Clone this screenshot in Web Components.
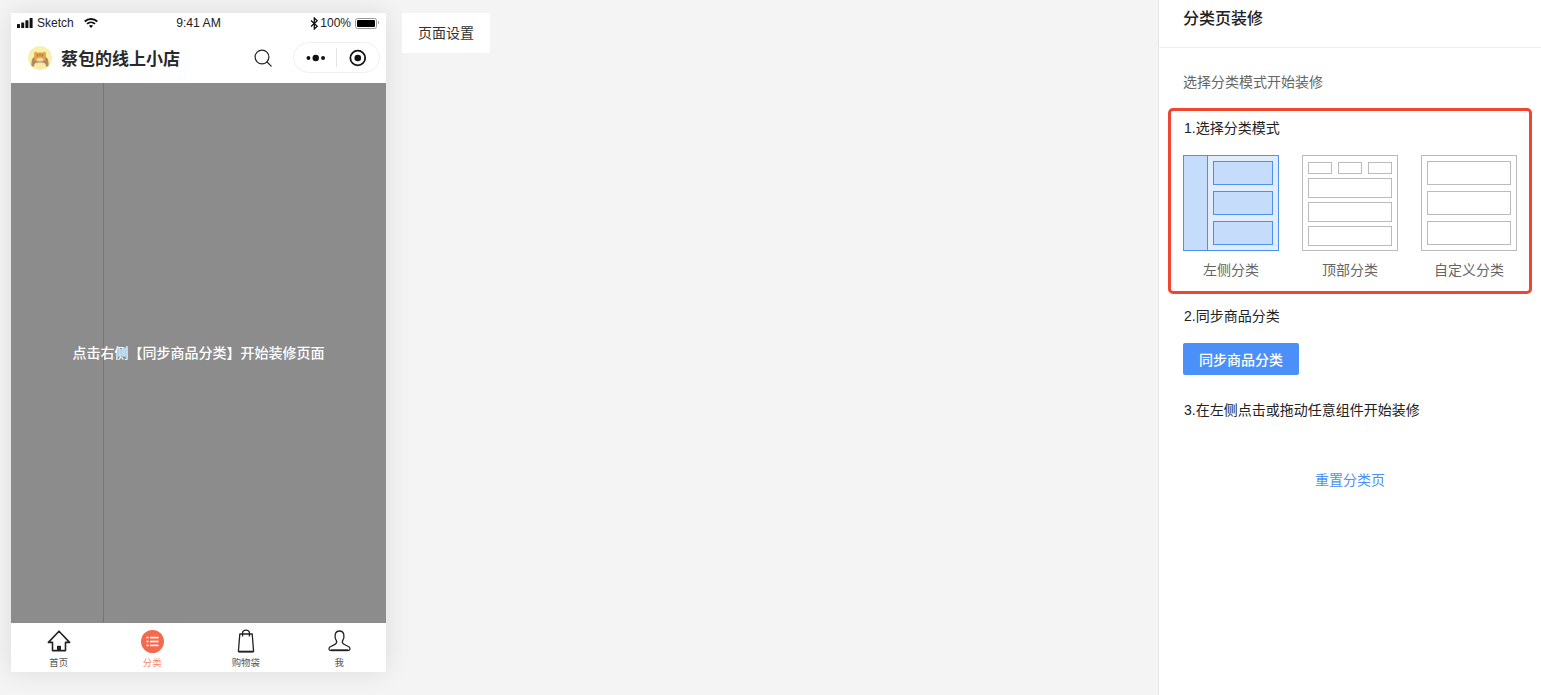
<!DOCTYPE html>
<html lang="zh">
<head>
<meta charset="utf-8">
<title>分类页装修</title>
<style>
	html, body {
		margin: 0;
		height: 100%;
		overflow: hidden;
		background: #f4f4f4;
		font-family: "Liberation Sans", "Noto Sans CJK SC", sans-serif;
	}
</style>
</head>
<body>
<decor-page>
	<phone-preview slot="phone">
		<span slot="title">蔡包的线上小店</span>
		<span slot="hint">点击右侧【同步商品分类】开始装修页面</span>
	</phone-preview>
	<settings-tab slot="tab">页面设置</settings-tab>
	<decor-panel slot="panel"></decor-panel>
</decor-page>

<script>
class DecorPage extends HTMLElement {
	constructor() {
		super();
		this.attachShadow({ mode: "open" });
		this.shadowRoot.innerHTML = /* HTML */ `
			<slot name="phone"></slot>
			<slot name="tab"></slot>
			<div class="right"><slot name="panel"></slot></div>

			<style>
				:host {
					display: flex;
					align-items: flex-start;
					gap: 16px;
					height: 695px;
					padding-left: 11px;
					box-sizing: border-box;
				}
				.right {
					margin-left: auto;
					height: 100%;
				}
			</style>
		`;
	}
}

class StatusBar extends HTMLElement {
	constructor() {
		super();
		this.attachShadow({ mode: "open" });
		this.shadowRoot.innerHTML = /* HTML */ `
			<div class="side">
				<svg width="16" height="10" viewBox="0 0 16 10" fill="#111">
					<rect x="0" y="6" width="3" height="4" rx=".6"/>
					<rect x="4.200" y="4.400" width="3" height="5.600" rx=".6"/>
					<rect x="8.400" y="2.200" width="3" height="7.800" rx=".6"/>
					<rect x="12.600" y="0" width="3" height="10" rx=".6"/>
				</svg>
				<span class="carrier">Sketch</span>
				<svg class="wifi" width="14" height="10" viewBox="0 0 14 10" fill="none" stroke="#111" stroke-width="1.900">
					<path d="M.7 3.500C4.300 .2 9.700 .2 13.300 3.500"/>
					<path d="M3 5.900C5.300 3.800 8.700 3.800 11 5.900"/>
					<path d="M7 10 4.900 7.800C6.200 6.800 7.800 6.800 9.100 7.800Z" fill="#111" stroke="none"/>
				</svg>
			</div>
			<span class="time">9:41 AM</span>
			<div class="side end">
				<svg width="9" height="13" viewBox="0 0 9 13" fill="none" stroke="#111" stroke-width="1.300">
					<path d="M1 3.500 7.200 9.200 4.300 12V1L7.200 3.800 1 9.500"/>
				</svg>
				<span class="pct">100%</span>
				<div class="battery"><i></i></div>
			</div>

			<style>
				:host {
					display: grid;
					grid-template-columns: 1fr auto 1fr;
					align-items: center;
					height: 20px;
					padding: 0 6px 7px 6px;
					font-size: 12px;
					color: #222;
				}
				.side {
					display: flex;
					align-items: center;
				}
				.end {
					justify-content: flex-end;
				}
				.carrier {
					margin-left: 4px;
				}
				.wifi {
					margin-left: 10px;
				}
				.time {
					font-size: 12.200px;
				}
				.pct {
					margin-left: 1px;
				}
				.battery {
					position: relative;
					margin: 0 3px 0 4px;
					width: 22px;
					height: 11px;
					padding: 1px;
					box-sizing: border-box;
					border: 1px solid #999;
					border-radius: 2.500px;
				}
				.battery::after {
					content: "";
					position: absolute;
					right: -3px;
					top: 2px;
					width: 1px;
					height: 3px;
					background: #aaa;
				}
				.battery i {
					display: block;
					height: 100%;
					background: #000;
					border-radius: 1px;
				}
			</style>
		`;
	}
}

class NavBar extends HTMLElement {
	constructor() {
		super();
		this.attachShadow({ mode: "open" });
		this.shadowRoot.innerHTML = /* HTML */ `
			<svg class="avatar" width="24" height="24" viewBox="0 0 24 24">
				<circle cx="12" cy="12" r="12" fill="#f7f1ad"/>
				<path d="M3.500 20C3 13 5 11 7 11L17 11C19 11 21 13 20.500 20L17 21H7Z" fill="#b08a5e"/>
				<path d="M6 21C6 17 8 16.500 12 16.500S18 17 18 21C15 23.500 9 23.500 6 21Z" fill="#f8e9a8"/>
				<path d="M6.500 5.500 9 6.500H15L17.500 5.500 18 11C18 15 15 16 12 16S6 15 6 11Z" fill="#e5a049"/>
				<path d="M9 8 10 10.500M12 7.500V10M15 8 14 10.500" stroke="#a8702f" stroke-width=".9" fill="none"/>
				<ellipse cx="12" cy="13.500" rx="3.500" ry="1.800" fill="#f2d9a4"/>
			</svg>
			<span class="title"><slot></slot></span>
			<svg class="search" width="18" height="18" viewBox="0 0 18 18" fill="none" stroke="#222" stroke-width="1.200">
				<circle cx="8" cy="8" r="6.900"/>
				<path d="M13 13 17.200 17.200" stroke-linecap="round"/>
			</svg>
			<div class="capsule">
				<svg width="20" height="8" viewBox="0 0 20 8" fill="#111">
					<circle cx="2.500" cy="4" r="2"/>
					<circle cx="10" cy="4" r="3.300"/>
					<circle cx="17.500" cy="4" r="2"/>
				</svg>
				<i class="divider"></i>
				<svg width="18" height="18" viewBox="0 0 18 18">
					<circle cx="9" cy="9" r="7.600" fill="none" stroke="#111" stroke-width="1.800"/>
					<circle cx="9" cy="9" r="3.400" fill="#111"/>
				</svg>
			</div>

			<style>
				:host {
					display: flex;
					align-items: center;
					padding: 2px 6px 10px 17px;
					height: 31px;
				}
				.avatar {
					flex: none;
				}
				.title {
					margin-left: 9px;
					font-size: 17px;
					font-weight: 700;
					color: #2a2a2a;
					white-space: nowrap;
				}
				.search {
					margin-left: auto;
					margin-right: 21px;
				}
				.capsule {
					display: flex;
					align-items: center;
					box-sizing: border-box;
					width: 87px;
					height: 31px;
					border: 1px solid #f0f0f0;
					border-radius: 16px;
					padding: 0 12px;
				}
				.divider {
					width: 1px;
					height: 19px;
					margin: 0 12px 0 11px;
					background: #e4e4e4;
				}
			</style>
		`;
	}
}

class TabItem extends HTMLElement {
	constructor() {
		super();
		this.attachShadow({ mode: "open" });
		this.shadowRoot.innerHTML = /* HTML */ `
			<div class="icon"><slot name="icon"></slot></div>
			<span class="label"><slot></slot></span>

			<style>
				:host {
					flex: 1;
					display: flex;
					flex-direction: column;
					align-items: center;
					color: #555;
				}
				:host([active]) {
					color: #f58a72;
				}
				.icon {
					display: flex;
					align-items: center;
					justify-content: center;
					height: 24px;
					margin-top: 6px;
				}
				.label {
					margin-top: 4px;
					font-size: 9.400px;
					line-height: 12px;
				}
			</style>
		`;
	}
}

class TabBar extends HTMLElement {
	constructor() {
		super();
		this.attachShadow({ mode: "open" });
		this.shadowRoot.innerHTML = /* HTML */ `
			<tab-item>
				<svg slot="icon" width="24" height="22" viewBox="0 0 24 22" fill="none" stroke="#222" stroke-width="1.600" stroke-linejoin="round">
					<path d="M12 1.200 1.400 12.400H5.500V20.600H18.500V12.400H22.600Z"/>
					<path d="M10 20.800V15.800H14V20.800" fill="#222" stroke="none"/>
				</svg>
				首页
			</tab-item>
			<tab-item active>
				<svg slot="icon" width="23" height="23" viewBox="0 0 23 23">
					<circle cx="11.500" cy="11.500" r="11.500" fill="#f36b4f"/>
					<g fill="#fff">
						<rect x="5.500" y="6.800" width="2" height="1.600"/>
						<rect x="9" y="6.800" width="8.500" height="1.600"/>
						<rect x="5.500" y="10.700" width="2" height="1.600"/>
						<rect x="9" y="10.700" width="8.500" height="1.600"/>
						<rect x="5.500" y="14.600" width="2" height="1.600"/>
						<rect x="9" y="14.600" width="8.500" height="1.600"/>
					</g>
				</svg>
				分类
			</tab-item>
			<tab-item>
				<svg slot="icon" width="18" height="24" viewBox="0 0 18 24" fill="none" stroke="#222" stroke-width="1.300" stroke-linejoin="round">
					<path d="M2.800 5H15.200L16.600 22.600H1.400Z"/>
					<path d="M1.800 22.600H16.200" stroke-width="1.800"/>
					<path d="M5.600 7.500V3.400C5.600 .4 12.400 .4 12.400 3.400V7.500"/>
				</svg>
				购物袋
			</tab-item>
			<tab-item>
				<svg slot="icon" width="23" height="22" viewBox="0 0 23 22" fill="none" stroke="#222" stroke-width="1.300" stroke-linejoin="round">
					<path d="M8.500 11C6 7.500 6.500 1 11.500 1S17 7.500 14.500 11C14 12.500 14.500 13.500 16 14.300L21.200 17C22.500 18 22 20.300 20.800 20.300H2.200C1 20.300 .5 18 1.800 17L7 14.300C8.500 13.500 9 12.500 8.500 11Z"/>
					<path d="M3 20.300H20" stroke-width="1.800"/>
				</svg>
				我
			</tab-item>

			<style>
				:host {
					display: flex;
					height: 49px;
					padding-left: 1px;
					background: #fff;
				}
			</style>
		`;
	}
}

class PhonePreview extends HTMLElement {
	constructor() {
		super();
		this.attachShadow({ mode: "open" });
		this.shadowRoot.innerHTML = /* HTML */ `
			<status-bar></status-bar>
			<nav-bar><slot name="title"></slot></nav-bar>
			<div class="canvas">
				<div class="rail"></div>
				<p class="hint"><slot name="hint"></slot></p>
			</div>
			<tab-bar></tab-bar>

			<style>
				:host {
					display: block;
					width: 375px;
					height: 659px;
					margin-top: 13px;
					background: #fff;
					box-shadow: 0 0 24px rgba(0, 0, 0, 0.1);
				}
				.canvas {
					display: flex;
					height: 540px;
					background: #8c8c8c;
				}
				.rail {
					flex: none;
					width: 93px;
					height: 100%;
					box-sizing: border-box;
					border-right: 1px solid #777;
				}
				.hint {
					position: absolute;
					left: 11px;
					width: 375px;
					top: 343px;
					margin: 0;
					text-align: center;
					font-size: 14px;
					line-height: 20px;
					font-weight: 500;
					color: #fff;
				}
			</style>
		`;
	}
}

class SettingsTab extends HTMLElement {
	constructor() {
		super();
		this.attachShadow({ mode: "open" });
		this.shadowRoot.innerHTML = /* HTML */ `
			<slot></slot>

			<style>
				:host {
					display: block;
					margin-top: 13px;
					padding: 0 16px;
					width: 56px;
					height: 40px;
					line-height: 40px;
					background: #fff;
					font-size: 14px;
					color: #333;
				}
			</style>
		`;
	}
}

class ModeCard extends HTMLElement {
	constructor() {
		super();
		this.attachShadow({ mode: "open" });
		this.shadowRoot.innerHTML = /* HTML */ `
			<div class="thumb"><slot name="thumb"></slot></div>
			<span class="label"><slot></slot></span>

			<style>
				:host {
					display: flex;
					flex-direction: column;
					align-items: center;
					width: 96px;
					font-size: 14px;
					line-height: 20px;
					color: #666;
				}
				.thumb {
					width: 96px;
					height: 96px;
				}
				.label {
					margin-top: 9px;
					white-space: nowrap;
				}
			</style>
		`;
	}
}

class ModeThumb extends HTMLElement {
	constructor() {
		super();
		this.attachShadow({ mode: "open" });
		const kind = this.getAttribute("kind");
		let inner = "";
		if (kind === "left") {
			inner = `<div class="side"></div><div class="rows"><b></b><b></b><b></b></div>`;
		} else if (kind === "top") {
			inner = `<div class="tops"><b></b><b></b><b></b></div><div class="rows wide"><b></b><b></b><b></b></div>`;
		} else {
			inner = `<div class="rows"><b></b><b></b><b></b></div>`;
		}
		this.shadowRoot.innerHTML = /* HTML */ `
			<div class="box ${kind}">${inner}</div>

			<style>
				:host {
					display: block;
				}
				.box {
					display: flex;
					box-sizing: border-box;
					width: 96px;
					height: 96px;
					border: 1px solid #bbb;
				}
				b {
					display: block;
					box-sizing: border-box;
					border: 1px solid #bbb;
				}
				.rows {
					flex: 1;
					display: flex;
					flex-direction: column;
					gap: 6px;
					padding: 5px;
				}
				.rows b {
					height: 24px;
				}
				.left {
					border-color: #4a90f5;
					background: #e1edfd;
				}
				.left b {
					border-color: #4a90f5;
					background: #c6dcfb;
				}
				.left .side {
					flex: none;
					width: 24px;
					box-sizing: border-box;
					background: #c6dcfb;
					border-right: 1px solid #4a90f5;
				}
				.top {
					flex-direction: column;
				}
				.tops {
					display: flex;
					gap: 6px;
					padding: 6px 5px 0;
				}
				.tops b {
					flex: 1;
					height: 12px;
				}
				.rows.wide {
					gap: 4px;
					padding: 4px 5px 0;
				}
				.rows.wide b {
					flex: none;
					height: 20px;
				}
			</style>
		`;
	}
}

class DecorPanel extends HTMLElement {
	constructor() {
		super();
		this.attachShadow({ mode: "open" });
		this.shadowRoot.innerHTML = /* HTML */ `
			<header>分类页装修</header>
			<div class="body">
				<p class="intro">选择分类模式开始装修</p>
				<section class="step-one">
					<p class="step">1.选择分类模式</p>
					<div class="cards">
						<mode-card><mode-thumb slot="thumb" kind="left"></mode-thumb>左侧分类</mode-card>
						<mode-card><mode-thumb slot="thumb" kind="top"></mode-thumb>顶部分类</mode-card>
						<mode-card><mode-thumb slot="thumb" kind="custom"></mode-thumb>自定义分类</mode-card>
					</div>
				</section>
				<p class="step two">2.同步商品分类</p>
				<button>同步商品分类</button>
				<p class="step three">3.在左侧点击或拖动任意组件开始装修</p>
				<a>重置分类页</a>
			</div>

			<style>
				:host {
					display: block;
					box-sizing: border-box;
					width: 383px;
					height: 100%;
					background: #fff;
					border-left: 1px solid #e6e6e6;
				}
				header {
					box-sizing: border-box;
					height: 48px;
					padding: 9px 24px 0;
					line-height: 20px;
					font-size: 16px;
					font-weight: 500;
					color: #222;
					border-bottom: 1px solid #eee;
				}
				.body {
					display: flex;
					flex-direction: column;
					align-items: flex-start;
					padding: 24px 9px 0;
					font-size: 14px;
					line-height: 20px;
				}
				p {
					margin: 0;
				}
				.intro {
					margin-left: 15px;
					color: #666;
				}
				.step {
					color: #222;
				}
				.step-one {
					box-sizing: border-box;
					width: 364px;
					height: 186px;
					margin-top: 16px;
					padding: 7px 12px 0;
					border: 3px solid #ee4630;
					border-radius: 5px;
				}
				.step-one .step {
					margin-left: 1px;
				}
				.cards {
					display: flex;
					gap: 23px;
					margin-top: 17px;
				}
				.two {
					margin: 12px 0 0 16px;
				}
				button {
					margin: 17px 0 0 15px;
					width: 116px;
					height: 32px;
					padding: 0;
					border: 0;
					border-radius: 2px;
					background: #4a90f8;
					color: #fff;
					font: 500 14px "Liberation Sans", "Noto Sans CJK SC", sans-serif;
				}
				.three {
					margin: 25px 0 0 16px;
				}
				a {
					align-self: center;
					margin-top: 50px;
					color: #4a90f5;
				}
			</style>
		`;
	}
}

customElements.define("decor-page", DecorPage);
customElements.define("status-bar", StatusBar);
customElements.define("nav-bar", NavBar);
customElements.define("tab-item", TabItem);
customElements.define("tab-bar", TabBar);
customElements.define("phone-preview", PhonePreview);
customElements.define("settings-tab", SettingsTab);
customElements.define("mode-card", ModeCard);
customElements.define("mode-thumb", ModeThumb);
customElements.define("decor-panel", DecorPanel);
</script>
</body>
</html>
